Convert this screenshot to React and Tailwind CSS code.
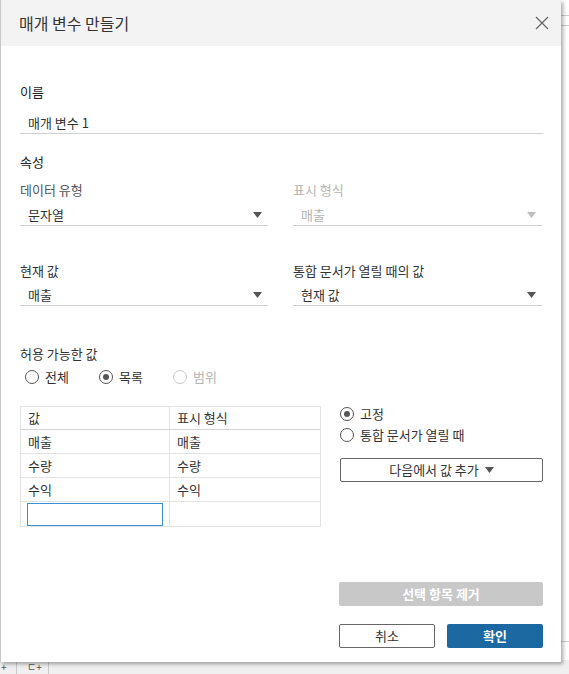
import React from "react";

const font = { fontFamily: '"Noto Sans CJK KR", "Noto Sans", sans-serif' };

function Arrow({ disabled }) {
  return (
    <svg width="9" height="6" viewBox="0 0 9 6" className="shrink-0">
      <path d="M0 0 L9 0 L4.5 6 Z" fill={disabled ? "#bdbdbd" : "#555555"} />
    </svg>
  );
}

function Radio({ checked, disabled, label, className = "" }) {
  return (
    <div className={"flex items-center " + className}>
      <span
        className={
          "w-[14px] h-[14px] rounded-full border flex items-center justify-center bg-white " +
          (disabled ? "border-[#c8c8c8]" : "border-[#555]")
        }
      >
        {checked && <span className="w-[6px] h-[6px] rounded-full bg-[#555]" />}
      </span>
      <span className={"ml-[6px] text-[13px] leading-[20px] " + (disabled ? "text-[#b4b4b4]" : "text-[#333]")}>
        {label}
      </span>
    </div>
  );
}

function Dropdown({ value, disabled }) {
  return (
    <div className="flex items-center justify-between h-[21px] border-b border-[#cfcfcf] pl-[8px] pr-[6px]">
      <span className={"text-[13px] leading-[20px] " + (disabled ? "text-[#b4b4b4]" : "text-[#333]")}>{value}</span>
      <Arrow disabled={disabled} />
    </div>
  );
}

function Cell({ children, right }) {
  return (
    <div
      className={
        "h-full flex items-center pl-[7px] text-[13px] text-[#333] " +
        (right ? "" : "border-r border-[#e3e3e3]")
      }
    >
      {children}
    </div>
  );
}

export default function App() {
  const rows = [
    ["매출", "매출"],
    ["수량", "수량"],
    ["수익", "수익"],
  ];
  return (
    <div className="w-[569px] h-[674px] bg-white overflow-hidden flex flex-col" style={font}>
      <div className="flex h-[662px]">
        {/* dialog */}
        <div className="w-[561px] h-[662px] bg-white border-l border-[#c8c8c8] shadow-[2px_2px_4px_rgba(0,0,0,0.35)] flex flex-col relative z-10">
          <div className="h-[46px] bg-[#f3f3f3] flex items-center justify-between pl-[18px] pr-[12px]">
            <span className="text-[16px] text-[#333] leading-[24px]">매개 변수 만들기</span>
            <svg width="14" height="14" viewBox="0 0 14 14">
              <path d="M1 1 L13 13 M13 1 L1 13" stroke="#666" strokeWidth="1.3" />
            </svg>
          </div>

          <div className="flex flex-col pl-[19px] pr-[18px]">
            <div className="mt-[36px] text-[13px] leading-[20px] text-[#222]">이름</div>
            <div className="mt-[11px] h-[21px] border-b border-[#cfcfcf] pl-[8px] text-[13px] leading-[20px] text-[#333]">
              매개 변수 1
            </div>
            <div className="mt-[18px] text-[13px] leading-[20px] text-[#222]">속성</div>

            <div className="mt-[8px] grid grid-cols-[248px_249px] gap-x-[25px]">
              <div className="text-[13px] leading-[20px] text-[#555]">데이터 유형</div>
              <div className="text-[13px] leading-[20px] text-[#b4b4b4]">표시 형식</div>
              <div className="mt-[5px]">
                <Dropdown value="문자열" />
              </div>
              <div className="mt-[5px]">
                <Dropdown value="매출" disabled />
              </div>

              <div className="mt-[35px] text-[13px] leading-[20px] text-[#333]">현재 값</div>
              <div className="mt-[35px] text-[13px] leading-[20px] text-[#333]">통합 문서가 열릴 때의 값</div>
              <div className="mt-[4px]">
                <Dropdown value="매출" />
              </div>
              <div className="mt-[4px]">
                <Dropdown value="현재 값" />
              </div>
            </div>

            <div className="mt-[38px] text-[13px] leading-[20px] text-[#333]">허용 가능한 값</div>
            <div className="mt-[3px] flex items-center pl-[5px]">
              <Radio label="전체" className="w-[74px]" />
              <Radio label="목록" checked className="w-[74px]" />
              <Radio label="범위" disabled />
            </div>

            <div className="mt-[19px] flex items-start">
              <div className="w-[301px] border border-[#e3e3e3]">
                <div className="grid grid-cols-[149px_1fr] h-[23px] border-b border-[#d4d4d4]">
                  <Cell>값</Cell>
                  <Cell right>표시 형식</Cell>
                </div>
                {rows.map((r, i) => (
                  <div key={i} className="grid grid-cols-[149px_1fr] h-[24px] border-b border-[#e3e3e3]">
                    <Cell>{r[0]}</Cell>
                    <Cell right>{r[1]}</Cell>
                  </div>
                ))}
                <div className="grid grid-cols-[149px_1fr] h-[24px]">
                  <div className="h-full border-r border-[#e3e3e3] pl-[6px] pr-[6px] pt-[1px]">
                    <div className="h-[23px] border border-[#3a8fd6]" />
                  </div>
                  <div />
                </div>
              </div>

              <div className="ml-[19px] flex-1 flex flex-col">
                <div className="flex items-center h-[16px]">
                  <Radio label="고정" checked />
                </div>
                <div className="mt-[5px] flex items-center h-[16px]">
                  <Radio label="통합 문서가 열릴 때" />
                </div>
                <div className="mt-[15px] h-[24px] border border-[#666] rounded-[2px] flex items-center justify-center gap-[6px] text-[13px] text-[#333]">
                  <span>다음에서 값 추가</span>
                  <Arrow />
                </div>
              </div>
            </div>
          </div>

          <div className="mt-auto pl-[338px] pr-[18px] pb-[14px] flex flex-col">
            <div className="h-[24px] rounded-[2px] bg-[#c8c8c8] flex items-center justify-center text-[13px] font-bold text-white">
              선택 항목 제거
            </div>
            <div className="mt-[18px] flex justify-between">
              <div className="w-[96px] h-[24px] border border-[#666] rounded-[2px] flex items-center justify-center text-[13px] text-[#333]">
                취소
              </div>
              <div className="w-[96px] h-[24px] rounded-[2px] bg-[#1b69a0] flex items-center justify-center text-[13px] font-bold text-white">
                확인
              </div>
            </div>
          </div>
        </div>

        {/* background right edge */}
        <div className="flex-1 flex flex-col bg-white">
          <div className="mt-[15px] h-[1px] bg-[#cccccc]" />
          <div className="mt-[9px] h-[1px] bg-[#cccccc]" />
          <div className="mt-auto mb-[20px] h-[1px] bg-[#cccccc]" />
        </div>
      </div>
      {/* background bottom strip */}
      <div className="flex-1 bg-[#f0f0f0] flex items-start text-[#555] text-[10px] leading-[10px] -mt-[2px] pt-[2px]">
        <span className="w-[17px] border-r border-[#c8c8c8] h-full pl-[1px]">+</span>
        <span className="w-[32px] border-r border-[#c8c8c8] h-full pl-[10px]">ㄷ+</span>
      </div>
    </div>
  );
}
